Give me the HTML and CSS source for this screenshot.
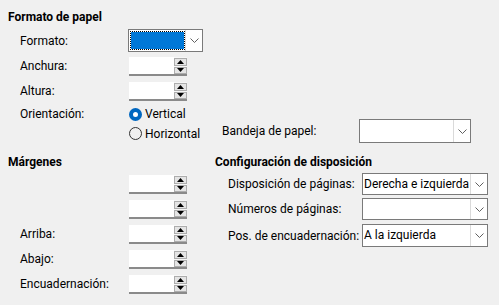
FILE: index.html
```html
<!DOCTYPE html>
<html lang="es">
<head>
<meta charset="utf-8">
<link rel="stylesheet" href="styles.css">
</head>
<body>
<div class="page">
  <section class="top">
    <div class="heading">Formato de papel</div>
    <div class="row row-combo">
      <span class="label">Formato:</span>
      <div class="combo combo-format">
        <div class="combo-text focused"></div>
        <div class="combo-btn"><svg width="9" height="5" viewBox="0 0 9 5"><polyline points="0.5,0.5 4.5,4.5 8.5,0.5" fill="none" stroke="#606060" stroke-width="1"/></svg></div>
      </div>
    </div>
    <div class="row row-spin">
      <span class="label">Anchura:</span>
      <div class="spin"><div class="spin-field"></div><div class="spin-btns"><span class="sb up"><svg width="7" height="4" viewBox="0 0 7 4"><polygon points="0,4 7,4 3.5,0" fill="#000"/></svg></span><span class="sb down"><svg width="7" height="4" viewBox="0 0 7 4"><polygon points="0,0 7,0 3.5,4" fill="#000"/></svg></span></div></div>
    </div>
    <div class="row row-spin">
      <span class="label">Altura:</span>
      <div class="spin"><div class="spin-field"></div><div class="spin-btns"><span class="sb up"><svg width="7" height="4" viewBox="0 0 7 4"><polygon points="0,4 7,4 3.5,0" fill="#000"/></svg></span><span class="sb down"><svg width="7" height="4" viewBox="0 0 7 4"><polygon points="0,0 7,0 3.5,4" fill="#000"/></svg></span></div></div>
    </div>
    <div class="orient">
      <span class="label label-top">Orientación:</span>
      <div class="radios">
        <div class="radio radio-v"><span class="dot checked"></span><span>Vertical</span></div>
        <div class="radio radio-h"><span class="dot"></span><span>Horizontal</span></div>
      </div>
      <div class="tray">
        <span class="tray-label">Bandeja de papel:</span>
        <div class="combo combo-tray">
          <div class="combo-text"></div>
          <div class="combo-btn"><svg width="9" height="5" viewBox="0 0 9 5"><polyline points="0.5,0.5 4.5,4.5 8.5,0.5" fill="none" stroke="#606060" stroke-width="1"/></svg></div>
        </div>
      </div>
    </div>
  </section>

  <section class="bottom">
    <div class="margins">
      <div class="heading">Márgenes</div>
      <div class="rows">
        <div class="row row-spin"><span class="label"></span>
          <div class="spin"><div class="spin-field"></div><div class="spin-btns"><span class="sb up"><svg width="7" height="4" viewBox="0 0 7 4"><polygon points="0,4 7,4 3.5,0" fill="#000"/></svg></span><span class="sb down"><svg width="7" height="4" viewBox="0 0 7 4"><polygon points="0,0 7,0 3.5,4" fill="#000"/></svg></span></div></div>
        </div>
        <div class="row row-spin"><span class="label"></span>
          <div class="spin"><div class="spin-field"></div><div class="spin-btns"><span class="sb up"><svg width="7" height="4" viewBox="0 0 7 4"><polygon points="0,4 7,4 3.5,0" fill="#000"/></svg></span><span class="sb down"><svg width="7" height="4" viewBox="0 0 7 4"><polygon points="0,0 7,0 3.5,4" fill="#000"/></svg></span></div></div>
        </div>
        <div class="row row-spin"><span class="label">Arriba:</span>
          <div class="spin"><div class="spin-field"></div><div class="spin-btns"><span class="sb up"><svg width="7" height="4" viewBox="0 0 7 4"><polygon points="0,4 7,4 3.5,0" fill="#000"/></svg></span><span class="sb down"><svg width="7" height="4" viewBox="0 0 7 4"><polygon points="0,0 7,0 3.5,4" fill="#000"/></svg></span></div></div>
        </div>
        <div class="row row-spin"><span class="label">Abajo:</span>
          <div class="spin"><div class="spin-field"></div><div class="spin-btns"><span class="sb up"><svg width="7" height="4" viewBox="0 0 7 4"><polygon points="0,4 7,4 3.5,0" fill="#000"/></svg></span><span class="sb down"><svg width="7" height="4" viewBox="0 0 7 4"><polygon points="0,0 7,0 3.5,4" fill="#000"/></svg></span></div></div>
        </div>
        <div class="row row-spin"><span class="label">Encuadernación:</span>
          <div class="spin"><div class="spin-field"></div><div class="spin-btns"><span class="sb up"><svg width="7" height="4" viewBox="0 0 7 4"><polygon points="0,4 7,4 3.5,0" fill="#000"/></svg></span><span class="sb down"><svg width="7" height="4" viewBox="0 0 7 4"><polygon points="0,0 7,0 3.5,4" fill="#000"/></svg></span></div></div>
        </div>
      </div>
    </div>

    <div class="layout">
      <div class="heading">Configuración de disposición</div>
      <div class="rows">
        <div class="lrow lrow-1">
          <span class="llabel">Disposición de páginas:</span>
          <div class="combo combo-layout">
            <div class="combo-text">Derecha e izquierda</div>
            <div class="combo-btn"><svg width="9" height="5" viewBox="0 0 9 5"><polyline points="0.5,0.5 4.5,4.5 8.5,0.5" fill="none" stroke="#606060" stroke-width="1"/></svg></div>
          </div>
        </div>
        <div class="lrow lrow-2">
          <span class="llabel">Números de páginas:</span>
          <div class="combo combo-layout">
            <div class="combo-text"></div>
            <div class="combo-btn"><svg width="9" height="5" viewBox="0 0 9 5"><polyline points="0.5,0.5 4.5,4.5 8.5,0.5" fill="none" stroke="#606060" stroke-width="1"/></svg></div>
          </div>
        </div>
        <div class="lrow lrow-3">
          <span class="llabel">Pos. de encuadernación:</span>
          <div class="combo combo-layout">
            <div class="combo-text">A la izquierda</div>
            <div class="combo-btn"><svg width="9" height="5" viewBox="0 0 9 5"><polyline points="0.5,0.5 4.5,4.5 8.5,0.5" fill="none" stroke="#606060" stroke-width="1"/></svg></div>
          </div>
        </div>
      </div>
    </div>
  </section>
</div>
</body>
</html>
```

FILE: styles.css
```css
* { box-sizing: border-box; }
html, body {
  margin: 0;
  padding: 0;
  background: #f0f0f0;
}
body {
  width: 499px;
  height: 305px;
  overflow: hidden;
  font-family: Roboto, "Noto Sans", sans-serif;
  font-size: 12px;
  color: #000;
}
.page {
  padding: 0 8px;
}
.heading {
  font-weight: bold;
  height: 16px;
  line-height: 16px;
  white-space: nowrap;
}
.top > .heading { margin-top: 9px; }

.row {
  display: flex;
  align-items: center;
}
.label {
  width: 120px;
  padding-left: 12px;
  white-space: nowrap;
  flex: none;
}
.row-combo { margin-top: 4px; height: 23px; }
.row-spin { margin-top: 3px; height: 22px; }

/* combo box */
.combo {
  display: flex;
  background: #fff;
  border: 1px solid #7a7a7a;
  flex: none;
}
.combo-text {
  flex: 1;
  white-space: nowrap;
  overflow: hidden;
  padding-left: 1px;
  line-height: 20px;
}
.combo-text.focused {
  margin: 1px 0 1px 1px;
  border: 1px dotted #000;
  background: #0078d7;
  background-clip: padding-box;
}
.combo-btn {
  width: 17px;
  flex: none;
  border-left: 1px solid #dadada;
  display: flex;
  align-items: center;
  justify-content: center;
}
.combo-format { width: 75px; height: 23px; }
.combo-tray { width: 112px; height: 24px; }
.combo-layout { width: 126px; height: 22px; }

/* spin field */
.spin {
  width: 62px;
  height: 22px;
  display: flex;
  padding: 2px 3px 0 1px;
  flex: none;
  background: #f0f0f0;
}
.spin-field {
  flex: 1;
  background: #fff;
  border-bottom: 2px solid #8a8a8a;
  margin-bottom: 1px;
}
.spin-btns {
  width: 13px;
  flex: none;
  display: flex;
  flex-direction: column;
  gap: 1px;
  padding-top: 1px;
  background: #f7f7f7;
  border-bottom: 2px solid #8a8a8a;
  margin-bottom: 1px;
}
.sb {
  height: 8px;
  background: #e5e5e5;
  border: 1px solid #adadad;
  display: flex;
  align-items: center;
  justify-content: center;
}

/* orientation */
.orient {
  display: flex;
  margin-top: 2px;
}
.label-top {
  height: 20px;
  line-height: 20px;
}
.radios {
  width: 94px;
  flex: none;
  display: flex;
  flex-direction: column;
}
.radio {
  display: flex;
  align-items: center;
  gap: 3px;
  padding-left: 1px;
  white-space: nowrap;
}
.radio-v { height: 20px; }
.radio-h { height: 19px; }
.dot {
  width: 13px;
  height: 13px;
  border-radius: 50%;
  border: 1px solid #333;
  flex: none;
  background: transparent;
}
.dot.checked {
  border: 4px solid #0067c0;
  background: #fff;
}
.tray {
  display: flex;
  align-items: center;
  align-self: flex-end;
}
.tray-label {
  width: 137px;
  white-space: nowrap;
}

/* bottom section */
.bottom {
  display: flex;
  margin-top: 11px;
}
.margins { width: 207px; flex: none; }
.layout { flex: 1; }
.rows { margin-top: 2px; }
.lrow {
  display: flex;
  align-items: center;
  margin-top: 3px;
}
.lrow-3 { margin-top: 4px; }
.lrow-1 .combo, .lrow-2 .combo { height: 22px; }
.lrow-3 .combo { height: 23px; }
.llabel {
  width: 147px;
  padding-left: 13px;
  white-space: nowrap;
  flex: none;
}
```
